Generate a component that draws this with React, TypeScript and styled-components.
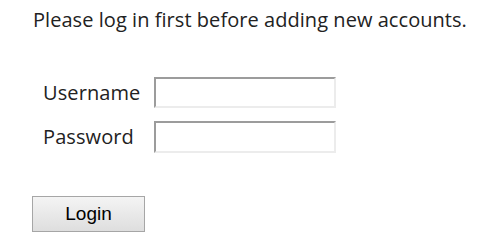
import React from 'react'
import styled, { createGlobalStyle } from 'styled-components'

const GlobalStyle = createGlobalStyle`
  html, body {
    margin: 0;
    padding: 0;
    background: #fff;
  }
  body {
    font-family: "Open Sans", "Liberation Sans", sans-serif;
    color: #222;
  }
`

const Page = styled.div`
  padding: 6px 0 0 32px;
`

const Message = styled.p`
  margin: 0;
  font-size: 20px;
  line-height: normal;
  letter-spacing: 0.05px;
  padding-left: 1px;
`

const LoginForm = styled.form`
  display: grid;
  grid-template-columns: 111px 182px;
  row-gap: 13px;
  align-items: center;
  margin-top: 44px;
  padding-left: 11px;
`

const Label = styled.label`
  font-size: 20px;
  line-height: normal;
  letter-spacing: 0.1px;
  margin-top: -1px;
`

const TextInput = styled.input<{ $tall?: boolean }>`
  box-sizing: border-box;
  width: 182px;
  height: ${(p) => (p.$tall ? 32 : 31)}px;
  margin: 0;
  padding: 2px 4px;
  border: 2px solid;
  border-color: #9c9c9c #ececec #ececec #9c9c9c;
  background: #fff;
  font: 14px "Liberation Sans", sans-serif;
  outline: none;
`

const LoginButton = styled.button`
  box-sizing: border-box;
  display: block;
  width: 113px;
  height: 36px;
  margin-top: 43px;
  padding: 0 0 1px;
  border: 1px solid #a6a6a6;
  border-radius: 0;
  background: linear-gradient(#f4f4f4, #dedede);
  font: 19px "Liberation Sans", Arial, sans-serif;
  color: #000;
  cursor: pointer;
`

export default function App() {
  return (
    <Page>
      <GlobalStyle />
      <Message>Please log in first before adding new accounts.</Message>
      <LoginForm onSubmit={(e) => e.preventDefault()}>
        <Label htmlFor="username">Username</Label>
        <TextInput id="username" type="text" />
        <Label htmlFor="password">Password</Label>
        <TextInput id="password" type="password" $tall />
      </LoginForm>
      <LoginButton type="submit">Login</LoginButton>
    </Page>
  )
}
